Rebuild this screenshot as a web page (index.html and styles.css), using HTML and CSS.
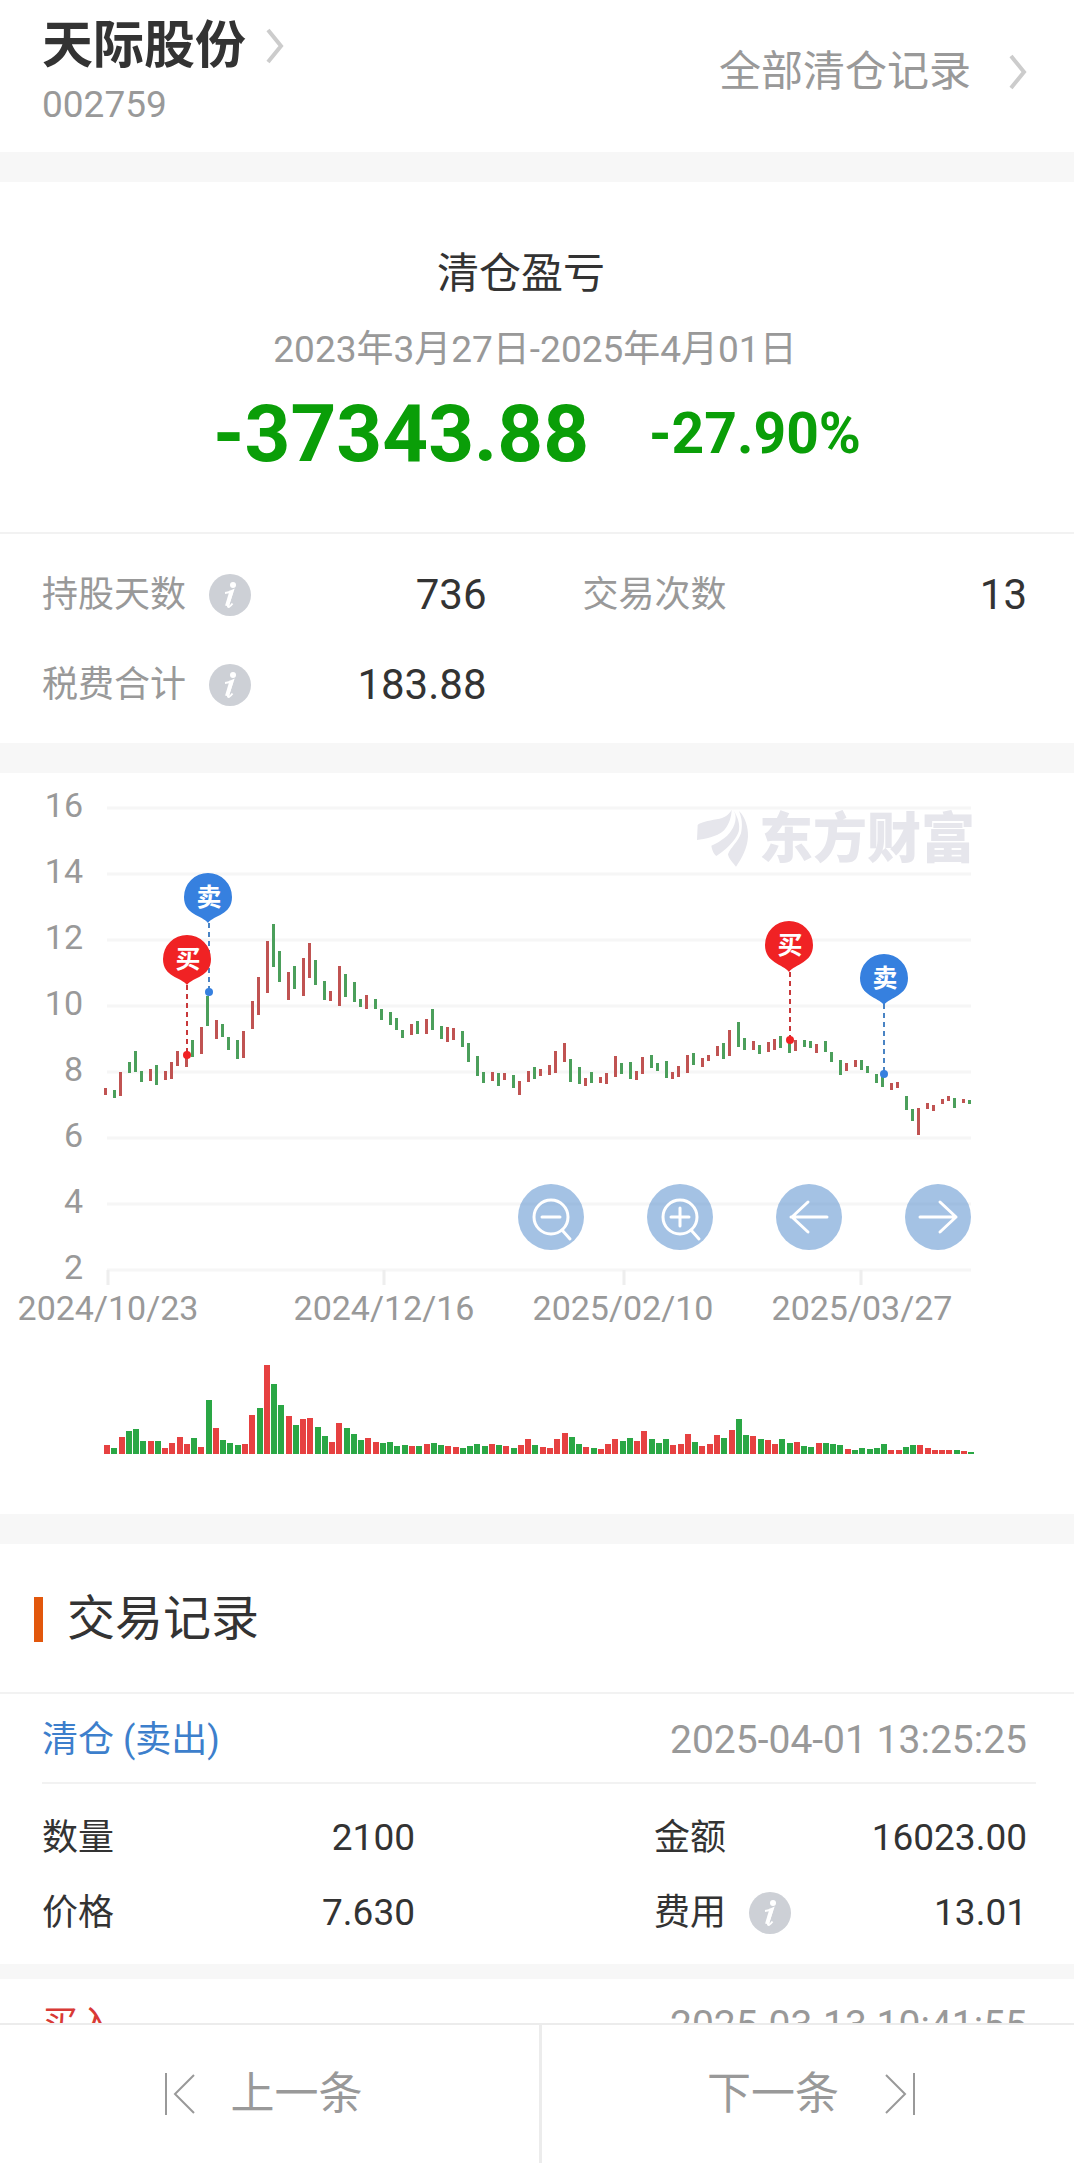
FILE: index.html
```html
<!DOCTYPE html>
<html lang="zh-CN">
<head>
<meta charset="utf-8">
<meta name="viewport" content="width=device-width, initial-scale=1">
<title>天际股份 清仓盈亏</title>
<link rel="stylesheet" href="styles.css">
</head>
<body>
<svg class="symbols" aria-hidden="true">
  <symbol id="chevron" viewBox="0 0 18 36"><path d="M2 2l13 16L2 34" fill="none" stroke="currentColor" stroke-width="4"/></symbol>
  <symbol id="info" viewBox="0 0 42 42">
    <circle cx="21" cy="21" r="21" fill="#cdd0d6"/>
    <circle cx="24" cy="11" r="3" fill="#fff"/>
    <path d="M16 19c3-.2 5-1 8-2.500l-5 15c-.5 2.500 2 1.500 4.500-2" fill="none" stroke="#fff" stroke-width="2"/>
    <path d="M22.500 17l-4.500 15" stroke="#fff" stroke-width="4"/>
  </symbol>
</svg>

<main class="content">
  <header class="stock">
    <div>
      <h1><a class="stock-name" href="#stock">天际股份<svg class="chevron"><use href="#chevron"/></svg></a></h1>
      <p class="stock-code">002759</p>
    </div>
    <a class="all-records" href="#all">全部清仓记录<svg class="chevron"><use href="#chevron"/></svg></a>
  </header>

  <section class="panel">
    <div class="summary">
      <h2>清仓盈亏</h2>
      <p class="period">2023年3月27日-2025年4月01日</p>
      <p class="profit"><strong class="amount">-37343.88</strong><strong class="rate">-27.90%</strong></p>
    </div>
    <dl class="stats">
      <div class="pair"><dt>持股天数<button class="info" type="button" aria-label="持股天数说明"><svg><use href="#info"/></svg></button></dt><dd>736</dd></div>
      <div class="pair"><dt>交易次数</dt><dd>13</dd></div>
      <div class="pair"><dt>税费合计<button class="info" type="button" aria-label="税费合计说明"><svg><use href="#info"/></svg></button></dt><dd>183.88</dd></div>
    </dl>
  </section>

  <section class="panel chart">
    <svg class="plot" viewBox="0 0 1074 741" role="img" aria-label="股价走势与成交量">
      <path class="grid" d="M107 35H971M107 101H971M107 167H971M107 233H971M107 299H971M107 365H971M107 431H971M107 497H971"/>
      <path class="ticks" d="M108 497V512M384 497V512M624 497V512M861 497V512"/>
      <g class="watermark">
        <g transform="translate(680 22) scale(.3333)">
          <path d="M155 44C146 60 135 68 110 73C85 78 60 82 53 90L51 135C75 132 110 125 130 108C145 92 154 70 155 44Z"/>
          <path d="M159 44C172 60 168 85 155 105C140 130 110 145 94 152C96 165 102 178 109 183C135 165 165 140 176 110C182 88 172 62 159 44Z"/>
          <path d="M177 48C195 65 205 95 204 125C202 160 185 190 168 215C155 200 146 190 144 178C150 160 175 140 183 115C188 90 186 70 177 48Z"/>
        </g>
        <text x="759" y="85">东方财富</text>
      </g>
      <g class="labels y-labels">
        <text x="83" y="44">16</text><text x="83" y="110">14</text><text x="83" y="176">12</text><text x="83" y="242">10</text>
        <text x="83" y="308">8</text><text x="83" y="374">6</text><text x="83" y="440">4</text><text x="83" y="506">2</text>
      </g>
      <g class="labels x-labels">
        <text x="108" y="547">2024/10/23</text><text x="384" y="547">2024/12/16</text><text x="623" y="547">2025/02/10</text><text x="862" y="547">2025/03/27</text>
      </g>
      <path id="price-up" class="price up"/>
      <path id="price-down" class="price down"/>
      <path id="volume-up" class="volume up"/>
      <path id="volume-down" class="volume down"/>
      <g class="pin sell"><path class="stem" d="M209 150V219"/><circle cx="209" cy="219" r="4"/><path d="M208 150C202 142 184 142 184 124a24 24 0 0 1 48 0C232 142 214 142 208 150Z"/><text x="209" y="133">卖</text></g>
      <g class="pin buy"><path class="stem" d="M187 212V282"/><circle cx="187" cy="282" r="4"/><path d="M187 212C181 204 163 204 163 186a24 24 0 0 1 48 0C211 204 193 204 187 212Z"/><text x="188" y="195">买</text></g>
      <g class="pin buy"><path class="stem" d="M790 199V267"/><circle cx="790" cy="267" r="4"/><path d="M789 199C783 191 765 190 765 172a24 24 0 0 1 48 0C813 190 795 191 789 199Z"/><text x="790" y="181">买</text></g>
      <g class="pin sell"><path class="stem" d="M884 231V301"/><circle cx="884" cy="301" r="4"/><path d="M884 232C878 224 860 223 860 205a24 24 0 0 1 48 0C908 223 890 224 884 232Z"/><text x="885" y="214">卖</text></g>
    </svg>
    <div class="chart-tools">
      <button type="button" aria-label="缩小"><svg viewBox="0 0 66 66"><circle cx="33" cy="33" r="17"/><path d="M24 33h18M44 46l8 9"/></svg></button>
      <button type="button" aria-label="放大"><svg viewBox="0 0 66 66"><circle cx="33" cy="33" r="17"/><path d="M24 33h18M33 24v18M44 46l8 9"/></svg></button>
      <button type="button" aria-label="左移"><svg viewBox="0 0 66 66"><path d="M51 33H15M32 18L16 33l16 15"/></svg></button>
      <button type="button" aria-label="右移"><svg viewBox="0 0 66 66"><path d="M15 33h36M35 18l16 15-16 15"/></svg></button>
    </div>
  </section>

  <section class="panel">
    <h2 class="section-title">交易记录</h2>
    <article class="record">
      <header class="record-head"><h3 class="sell-text">清仓 (卖出)</h3><time>2025-04-01 13:25:25</time></header>
      <dl class="details">
        <div class="pair"><dt>数量</dt><dd>2100</dd></div>
        <div class="pair"><dt>金额</dt><dd>16023.00</dd></div>
        <div class="pair"><dt>价格</dt><dd>7.630</dd></div>
        <div class="pair"><dt>费用<button class="info" type="button" aria-label="费用说明"><svg><use href="#info"/></svg></button></dt><dd>13.01</dd></div>
      </dl>
    </article>
    <article class="record">
      <header class="record-head"><h3 class="buy-text">买入</h3><time>2025-03-13 10:41:55</time></header>
    </article>
  </section>
</main>

<nav class="pager">
  <button type="button" class="prev"><svg viewBox="0 0 30 42"><path d="M1 0v42M29 2L10 21l19 19"/></svg>上一条</button>
  <button type="button" class="next">下一条<svg viewBox="0 0 30 42"><path d="M29 0v42M1 2l19 19L1 40"/></svg></button>
</nav>
<script src="chart.js"></script>
</body>
</html>
```
FILE: styles.css
```css
* { box-sizing: border-box; margin: 0; padding: 0; }

body {
  display: flex;
  flex-direction: column;
  height: 100vh;
  background: #fff;
  color: #333;
  font-family: Roboto, "Noto Sans CJK SC", sans-serif;
  font-size: 36px;
  line-height: 48px;
}

h1, h2, h3 { font-weight: 400; }
a { color: inherit; text-decoration: none; }
button { border: 0; background: none; color: inherit; font: inherit; cursor: pointer; }
svg { display: block; }
.symbols { position: absolute; width: 0; height: 0; }

.content {
  flex: 1;
  min-height: 0;
  overflow-y: auto;
  scrollbar-width: none;
}

/* Header */
.stock {
  display: flex;
  justify-content: space-between;
  align-items: flex-start;
  height: 152px;
  padding: 13px 47px 0 42px;
}
.stock-name { display: flex; align-items: center; gap: 20px; font-size: 51px; line-height: 66px; font-weight: 700; }
.stock-code { font-size: 37px; line-height: 52px; color: #999; }
.all-records { display: flex; align-items: center; gap: 38px; padding-top: 31px; font-size: 42px; line-height: 56px; color: #999; }
.chevron { width: 18px; height: 36px; color: #ccc; }

.panel { border-top: 30px solid #f7f7f7; }

/* Profit summary */
.summary { padding: 62px 0 58px; text-align: center; border-bottom: 2px solid #f2f2f2; }
.summary h2 { padding-right: 32px; font-size: 42px; line-height: 60px; }
.period { margin-top: 20px; padding-right: 4px; font-size: 37px; line-height: 52px; color: #999; }
.profit { display: flex; justify-content: center; align-items: center; gap: 60px; margin-top: 18px; line-height: 80px; color: #0a9e08; }
.amount { font-size: 80px; }
.rate { font-size: 57px; }

.pair { display: flex; justify-content: space-between; align-items: center; }
.pair dt { display: flex; align-items: center; gap: 23px; }
.info, .info svg { width: 42px; height: 42px; }

.stats { display: grid; grid-template-columns: 1fr 1fr; column-gap: 96px; padding: 16px 47px 13px 42px; }
.stats .pair { height: 90px; }
.stats dt { color: #999; }
.stats dd { font-size: 42px; }

/* Chart */
.chart { position: relative; }
.plot { width: 100%; height: auto; }
.grid { stroke: #f6f6f6; stroke-width: 3; }
.ticks { stroke: #eee; stroke-width: 3; }
.watermark { fill: #e6e6ec; font-size: 54px; font-weight: 900; }
.labels { fill: #999; font-size: 34px; }
.y-labels { text-anchor: end; }
.x-labels { text-anchor: middle; }
.price { stroke-width: 3; }
.price.up { stroke: #c05352; }
.price.down { stroke: #4b9f5b; }
.volume { stroke-width: 6; }
.volume.up { stroke: #e64141; }
.volume.down { stroke: #2aa745; }
.pin text { fill: #fff; font-size: 25px; font-weight: 700; text-anchor: middle; }
.pin .stem { stroke-width: 2; stroke-dasharray: 5 4; }
.buy { fill: #f02224; stroke: none; }
.buy .stem { stroke: #c8383a; }
.sell { fill: #3680df; }
.sell .stem { stroke: #4a84c4; }

.chart-tools {
  position: absolute;
  top: 55.5%;
  right: 103px;
  display: flex;
  gap: 63px;
}
.chart-tools button { width: 66px; height: 66px; border-radius: 50%; background: rgb(74 134 202 / 50%); }
.chart-tools svg { fill: none; stroke: #fff; stroke-width: 3; stroke-linecap: round; stroke-linejoin: round; }

/* Trade records */
.section-title {
  display: flex;
  align-items: center;
  gap: 24px;
  height: 150px;
  padding: 2px 0 0 34px;
  border-bottom: 2px solid #f2f2f2;
  font-size: 48px;
}
.section-title::before { content: ""; width: 9px; height: 45px; background: #e2570c; }
.record + .record { border-top: 15px solid #f7f7f7; }
.record-head {
  display: flex;
  justify-content: space-between;
  align-items: center;
  height: 90px;
  margin: 0 38px 0 42px;
  padding: 4px 9px 0 0;
  border-bottom: 2px solid #f2f2f2;
}
.record-head h3 { font-size: 36px; }
.record-head time { font-size: 39px; color: #999; }
.sell-text { color: #3d7fcc; }
.buy-text { color: #d93a36; }
.details { display: grid; grid-template-columns: 1fr 1fr; column-gap: 239px; padding: 16px 47px 14px 42px; }
.details .pair { height: 75px; }
.details dd { font-size: 37px; }

/* Previous / next */
.pager {
  display: grid;
  grid-template-columns: 50.2% 1fr;
  height: 140px;
  border-top: 2px solid #ececec;
  background: #fff;
  color: #999;
  font-size: 44px;
}
.pager button { display: flex; justify-content: center; align-items: center; }
.pager .prev { gap: 36px; padding-right: 12px; }
.pager .next { gap: 46px; padding-left: 6px; border-left: 3px solid #ececec; }
.pager svg { width: 30px; height: 42px; fill: none; stroke: currentColor; stroke-width: 2; }
```
FILE: chart.js
```js
// Daily ranges: direction (r = rise, g = fall), high and low on the plot's vertical axis.
const prices = `r315-322 g317-325 r299-323 g289-300 g278-299 g298-309 r296-308 g292-312 r298-307 r289-306
r278-293 r284-294 g267-284 r254-281 g223-253 r247-266 g251-264 g264-277 g267-286 r258-285
r228-256 r204-242 r168-220 g151-194 g178-209 r199-227 g193-216 r185-223 r170-205 g187-212
g208-227 r218-228 r193-233 g201-224 g209-229 g226-234 r222-236 g226-236 g236-247 g239-252
g245-257 g257-265 r251-262 g248-261 r246-261 g236-257 g253-266 r254-269 r255-267 g258-274
g270-289 g283-303 g299-310 r299-308 g300-313 r300-307 g302-315 r308-322 r298-309 g294-306
r296-303 r292-302 r278-300 r270-289 g286-309 g294-311 r305-313 g299-310 r304-310 r300-311
r283-304 g290-301 g289-306 r298-307 r284-301 g282-295 g290-298 g288-305 r299-306 r293-304
r282-300 g280-292 r285-294 r282-288 r273-283 g270-286 r257-283 g249-274 g265-277 r268-277
g272-281 r269-279 r266-277 g263-275 g269-280 r267-278 g267-274 g268-275 r271-280 g268-279
g279-289 g287-302 r290-298 r287-294 g287-297 g293-300 g301-310 g304-314 r310-317 r309-315
g323-337 g336-348 r335-362 r330-336 r332-338 r326-331 r323-328 g325-335 r326-330 g327-331`.split(/\s+/);

// Daily volumes: direction and bar height.
const volumes = `r9 g6 r17 g23 g25 g13 r13 g13 r6 r11 r17 r10 g16 r7 g54 r26 g14 g11 g9 r10
r39 g46 r89 g70 g49 r38 g29 r35 r36 g27 g18 r12 r31 g26 g20 g14 r16 r12 g11 g12
g8 g9 r8 g8 r10 g11 g9 r8 r7 g6 g8 g10 g8 r10 g9 r8 g6 r9 r15 g9
r7 r6 r15 r21 g17 g10 r7 g6 r5 r10 r15 g13 g16 r13 r23 g15 g11 g15 r9 r10
r20 g12 r8 r10 r19 g16 r24 g35 g19 r18 g15 r14 r10 g15 g11 r12 g8 g7 r11 g11
g10 g9 r5 g4 g6 g5 g6 g10 r4 r4 g7 g9 r9 r6 r4 r4 r4 g4 r3 g2`.split(/\s+/);

const BASELINE = 681;
const STEP = 7.262;

const draw = (id, d) => document.getElementById(id).setAttribute("d", d);
const join = (items, direction, toPath) =>
  items.map((item, i) => (item[0] === direction ? toPath(item.slice(1), i) : "")).join("");

const pricePath = (range, i) => {
  const [high, low] = range.split("-");
  const x = 105.5 + 3 * Math.round((i * STEP) / 3 + 0.25);
  return `M${x} ${high}V${low}`;
};
const volumePath = (height, i) => `M${Math.round(107 + i * STEP)} ${BASELINE}v-${height}`;

draw("price-up", join(prices, "r", pricePath));
draw("price-down", join(prices, "g", pricePath));
draw("volume-up", join(volumes, "r", volumePath));
draw("volume-down", join(volumes, "g", volumePath));
```
